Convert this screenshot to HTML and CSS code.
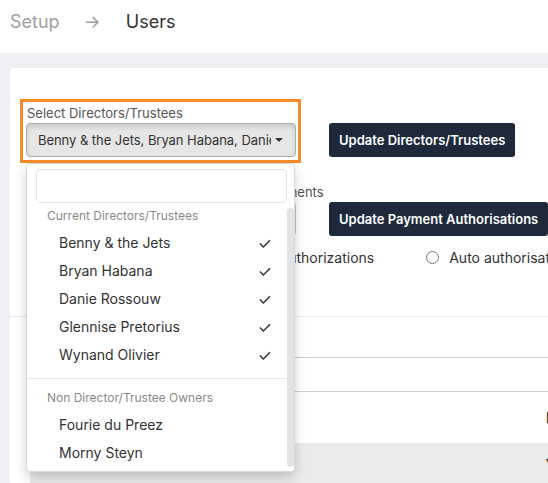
FILE: index.html
```html
<!DOCTYPE html>
<html lang="en">
<head>
<meta charset="utf-8">
<title>Setup – Users</title>
<link rel="stylesheet" href="styles.css">
</head>
<body>
<header class="topbar">
  <span class="crumb">Setup</span>
  <span class="crumb-sep">→</span>
  <span class="crumb crumb-current">Users</span>
</header>
<main class="page">
  <section class="card">
    <div class="form">
      <div class="form-row">
        <div class="group group-highlight">
          <label class="field-label">Select Directors/Trustees</label>
          <div class="select-wrap">
            <button class="select-btn select-btn-open" type="button">
              <span class="select-text">Benny &amp; the Jets, Bryan Habana, Danie Rossouw, Glennise Pretorius, Wynand Olivier</span>
              <span class="caret"></span>
            </button>
            <div class="dropdown">
              <div class="search"><input class="search-input" type="text"></div>
              <div class="list">
                <ul class="options">
                  <li class="opt-header">Current Directors/Trustees</li>
                  <li class="opt"><span>Benny &amp; the Jets</span><svg class="check" viewBox="0 0 12 9"><path d="M1 4.6 L4.3 7.9 L11 1.2"/></svg></li>
                  <li class="opt"><span>Bryan Habana</span><svg class="check" viewBox="0 0 12 9"><path d="M1 4.6 L4.3 7.9 L11 1.2"/></svg></li>
                  <li class="opt"><span>Danie Rossouw</span><svg class="check" viewBox="0 0 12 9"><path d="M1 4.6 L4.3 7.9 L11 1.2"/></svg></li>
                  <li class="opt"><span>Glennise Pretorius</span><svg class="check" viewBox="0 0 12 9"><path d="M1 4.6 L4.3 7.9 L11 1.2"/></svg></li>
                  <li class="opt"><span>Wynand Olivier</span><svg class="check" viewBox="0 0 12 9"><path d="M1 4.6 L4.3 7.9 L11 1.2"/></svg></li>
                  <li class="divider"></li>
                  <li class="opt-header">Non Director/Trustee Owners</li>
                  <li class="opt"><span>Fourie du Preez</span></li>
                  <li class="opt"><span>Morny Steyn</span></li>
                </ul>
                <div class="scrollbar"></div>
              </div>
            </div>
          </div>
        </div>
        <button class="btn-dark" type="button">Update Directors/Trustees</button>
      </div>
      <div class="form-row">
        <div class="group">
          <label class="field-label">Select Users for Authorising Outgoing Payments</label>
          <button class="select-btn" type="button">
            <span class="select-text">Benny &amp; the Jets, Bryan Habana</span>
            <span class="caret"></span>
          </button>
        </div>
        <button class="btn-dark" type="button">Update Payment Authorisations</button>
      </div>
      <div class="radios">
        <label class="radio-option"><input type="radio" name="auth" checked><span>Directors/Trustees needed for all authorizations</span></label>
        <label class="radio-option"><input type="radio" name="auth"><span>Auto authorisation of payments</span></label>
      </div>
    </div>
    <div class="table-area">
      <div class="table">
        <div class="trow trow-tools"></div>
        <div class="trow trow-filter"></div>
        <div class="trow trow-head"><span class="tcell-spacer"></span><span class="tcell">Email</span></div>
        <div class="trow trow-grey"><span class="tcell-spacer"></span><span class="tcell tcell-small">▾</span></div>
      </div>
    </div>
  </section>
</main>
</body>
</html>
```
FILE: styles.css
```css
html, body {
  margin: 0;
  overflow: hidden;
}
body {
  font-family: Inter, "Noto Sans", "Liberation Sans", sans-serif;
  background: #eff0f4;
  color: #333;
  width: 548px;
  height: 483px;
}
.topbar {
  box-sizing: border-box;
  height: 53px;
  background: #fff;
  display: flex;
  align-items: flex-start;
  padding: 10px 10px 0;
  font-size: 18px;
  line-height: 24px;
}
.crumb { color: #a0a0a0; }
.crumb-current { color: #333; }
.crumb-sep {
  color: #a0a0a0;
  margin: 0 25px 0 24px;
}
.page {
  padding: 15px 0 0 10px;
}
.card {
  background: #fff;
  border-radius: 4px 0 0 0;
  width: 640px;
  height: 520px;
  box-sizing: border-box;
  padding-top: 31px;
}
.form {
  padding: 0 10px;
}
.form-row {
  display: grid;
  grid-template-columns: 281px max-content;
  column-gap: 28px;
  align-items: end;
}
.form-row + .form-row {
  margin-top: 15px;
}
.group {
  box-sizing: border-box;
  width: 281px;
  border: 3px solid transparent;
  padding: 3px 2px 3px 3px;
}
.group-highlight {
  border-color: #f78a2a;
}
.field-label {
  display: block;
  font-size: 13px;
  line-height: 18px;
  color: #555;
  margin-left: 1px;
  margin-top: -1px;
  margin-bottom: 1px;
  white-space: nowrap;
}
.select-wrap {
  position: relative;
}
.select-btn {
  box-sizing: border-box;
  width: 100%;
  height: 34px;
  display: flex;
  align-items: center;
  padding: 0 12px 0 11px;
  border: 1px solid #c4c4c4;
  border-radius: 4px;
  background: #fff;
  font-family: inherit;
  font-size: 13px;
  color: #333;
  text-align: left;
}
.select-btn-open {
  background: #e6e6e6;
  border-color: #adadad;
  box-shadow: inset 0 3px 5px rgba(0, 0, 0, 0.125);
}
.select-text {
  flex: 1;
  overflow: hidden;
  white-space: nowrap;
  margin-right: 4px;
  letter-spacing: -0.05px;
}
.caret {
  width: 0;
  height: 0;
  border-top: 4px solid #333;
  border-left: 4px solid transparent;
  border-right: 4px solid transparent;
}
.dropdown {
  position: absolute;
  top: 40px;
  left: 0;
  right: 1px;
  z-index: 10;
  background: #fff;
  border: 1px solid rgba(0, 0, 0, 0.15);
  border-radius: 4px;
  box-shadow: 0 6px 12px rgba(0, 0, 0, 0.175);
}
.search {
  padding: 5px 7px 3px 9px;
}
.search-input {
  box-sizing: border-box;
  display: block;
  width: 100%;
  height: 34px;
  border: 1px solid #e2e2e2;
  border-radius: 4px;
  margin: 0;
}
.list {
  display: flex;
}
.options {
  flex: 1;
  list-style: none;
  margin: 0;
  padding: 0 0 5px;
}
.opt-header {
  font-size: 12px;
  line-height: 17px;
  padding: 1px 20px 4px;
  color: #8a8a8a;
}
.opt {
  height: 28px;
  display: flex;
  align-items: center;
  justify-content: space-between;
  padding: 0 16px 0 32px;
  font-size: 14px;
  color: #333;
}
.check {
  width: 12px;
  height: 9px;
  margin-top: 3px;
  fill: none;
  stroke: #333;
  stroke-width: 1.4;
}
.divider {
  height: 1px;
  background: #e5e5e5;
  margin: 10px 0 9px;
}
.scrollbar {
  width: 7px;
  margin: 2px 0 4px;
  border-radius: 4px;
  background: #e3e3e3;
}
.btn-dark {
  height: 34px;
  margin-bottom: 6px;
  padding: 0 10px;
  border: none;
  border-radius: 3px;
  background: #1e293b;
  color: #fff;
  font-family: inherit;
  font-size: 13px;
  font-weight: 600;
  white-space: nowrap;
}
.radios {
  display: flex;
  align-items: center;
  gap: 52px;
  height: 20px;
  margin-top: 5px;
  padding-left: 16px;
  font-size: 14px;
  color: #333;
  white-space: nowrap;
}
.radio-option {
  display: flex;
  align-items: center;
  gap: 10px;
}
.radio-option input {
  margin: 0;
  width: 13px;
  height: 13px;
}
.table-area {
  margin-top: 49px;
  border-top: 1px solid #e8e8e8;
}
.table {
  margin-left: 20px;
}
.trow {
  display: flex;
  align-items: center;
  font-size: 14px;
  color: #333;
}
.trow-tools {
  height: 40px;
  border-bottom: 1px solid #cfcfcf;
}
.trow-filter {
  height: 33px;
  border-bottom: 1px solid #cfcfcf;
}
.trow-head {
  height: 51px;
  font-weight: 600;
}
.trow-grey {
  height: 60px;
  background: #ebebeb;
  align-items: flex-start;
  padding-top: 10px;
  box-sizing: border-box;
}
.tcell-spacer {
  flex: 0 0 516px;
}
.tcell-small {
  font-size: 12px;
}
```
